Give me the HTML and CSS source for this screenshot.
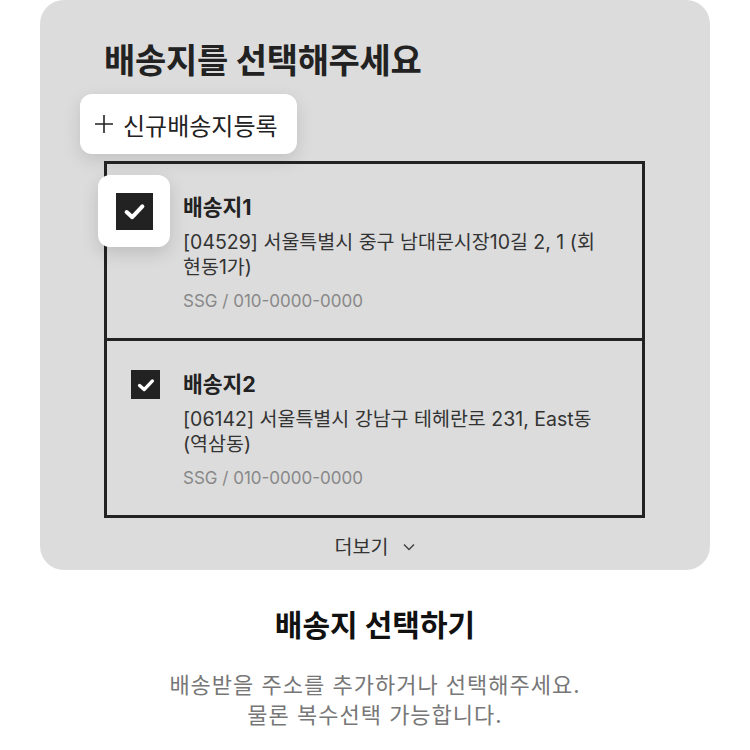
FILE: index.html
```html
<!DOCTYPE html>
<html lang="ko">
<head>
  <meta charset="UTF-8">
  <meta name="viewport" content="width=device-width, initial-scale=1.0">
  <title>배송지 선택하기</title>
  <link rel="stylesheet" href="styles.css">
</head>
<body>
  <div class="panel">
    <h2 class="panel-title">배송지를 선택해주세요</h2>

    <button class="add-btn" type="button">
      <svg class="plus" viewBox="0 0 18 18"><path d="M9 0v18M0 9h18"/></svg>
      신규배송지등록
    </button>

    <div class="address-list">
      <div class="address">
        <!-- enlarged checkbox callout -->
        <div class="check-focus">
          <span class="check check-lg">
            <svg viewBox="0 0 24 24"><polyline points="5,12.5 10,17 19,7.5"/></svg>
          </span>
        </div>
        <span class="check">
          <svg viewBox="0 0 24 24"><polyline points="5,12.5 10,17 19,7.5"/></svg>
        </span>
        <div class="address-info">
          <h3>배송지1</h3>
          <p class="address-line">[04529] 서울특별시 중구 남대문시장10길 2, 1 (회현동1가)</p>
          <p class="address-meta">SSG / 010-0000-0000</p>
        </div>
      </div>

      <div class="address">
        <span class="check">
          <svg viewBox="0 0 24 24"><polyline points="5,12.5 10,17 19,7.5"/></svg>
        </span>
        <div class="address-info">
          <h3>배송지2</h3>
          <p class="address-line">[06142] 서울특별시 강남구 테헤란로 231, East동 (역삼동)</p>
          <p class="address-meta">SSG / 010-0000-0000</p>
        </div>
      </div>
    </div>

    <div class="more">
      더보기
      <svg class="chevron" viewBox="0 0 12 8"><polyline points="1,1.5 6,6.5 11,1.5"/></svg>
    </div>
  </div>

  <section class="caption">
    <h1>배송지 선택하기</h1>
    <p>배송받을 주소를 추가하거나 선택해주세요.<br>물론 복수선택 가능합니다.</p>
  </section>
</body>
</html>
```

FILE: styles.css
```css
:root {
  --panel: #dcdcdc;
  --ink: #222;
  --muted: #888;
}

* {
  margin: 0;
  padding: 0;
  box-sizing: border-box;
}

body {
  font-family: Inter, "Noto Sans CJK KR", sans-serif;
  color: var(--ink);
  background: #fff;
  width: 750px;
}

.panel {
  margin: 0 40px;
  height: 570px;
  background: var(--panel);
  border-radius: 24px;
  padding: 41px 64px 0;
  display: flex;
  flex-direction: column;
  align-items: flex-start;
}

.panel-title {
  font-size: 34px;
  line-height: 40px;
  font-weight: 700;
  letter-spacing: -0.3px;
}

.add-btn {
  margin: 13px 0 0 -24px;
  height: 60px;
  padding: 0 19px 0 15px;
  border: none;
  border-radius: 12px;
  background: #fff;
  font: inherit;
  font-size: 24px;
  color: var(--ink);
  display: flex;
  align-items: center;
  gap: 10px;
  box-shadow: 0 6px 18px rgba(0, 0, 0, 0.12);
}

.plus {
  width: 18px;
  height: 18px;
  stroke: var(--ink);
  stroke-width: 1.6;
}

.address-list {
  margin-top: 7px;
  width: 541px;
  border: 3px solid var(--ink);
}

.address {
  position: relative;
  display: flex;
  gap: 23px;
  padding: 29px 24px 25px;
}

.address + .address {
  border-top: 3px solid var(--ink);
}

.check {
  flex: none;
  width: 29px;
  height: 29px;
  background: var(--ink);
  display: flex;
  align-items: center;
  justify-content: center;
}

.check svg {
  width: 22px;
  height: 22px;
  fill: none;
  stroke: #fff;
  stroke-width: 3.6;
  stroke-linecap: round;
  stroke-linejoin: round;
}

.check-focus {
  position: absolute;
  left: -9px;
  top: 11px;
  width: 72px;
  height: 72px;
  border-radius: 12px;
  background: #fff;
  display: flex;
  align-items: center;
  justify-content: center;
  box-shadow: 0 6px 18px rgba(0, 0, 0, 0.14);
  z-index: 1;
}

.check-lg {
  width: 37px;
  height: 37px;
}

.check-lg svg {
  width: 27px;
  height: 27px;
}

.address-info {
  flex: 1;
  padding-right: 14px;
}

.address-info h3 {
  font-size: 21.5px;
  line-height: 28px;
  font-weight: 700;
}

.address-line {
  margin-top: 9px;
  font-size: 19.5px;
  line-height: 25px;
  color: #333;
}

.address-meta {
  margin-top: 9px;
  font-size: 17px;
  line-height: 24px;
  color: var(--muted);
}

.more {
  align-self: center;
  margin-top: 16px;
  font-size: 19.5px;
  line-height: 26px;
  color: #333;
  display: flex;
  align-items: center;
  gap: 15px;
}

.chevron {
  width: 12px;
  height: 8px;
  fill: none;
  stroke: #444;
  stroke-width: 1.5;
}

.caption {
  text-align: center;
  padding-top: 35px;
}

.caption h1 {
  font-size: 30px;
  line-height: 40px;
  font-weight: 700;
  color: #111;
}

.caption p {
  margin-top: 25px;
  font-size: 22px;
  line-height: 30px;
  letter-spacing: 1px;
  color: #777;
}
```
